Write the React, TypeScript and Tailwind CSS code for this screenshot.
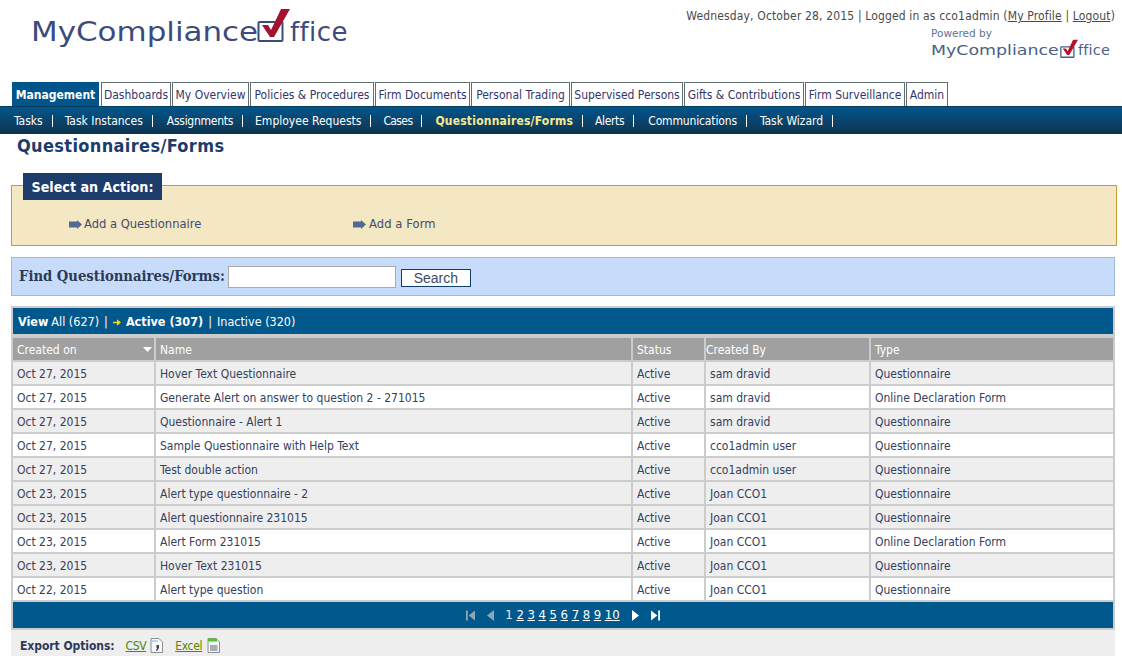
const F = "font-['DejaVu_Sans_Condensed','DejaVu_Sans',sans-serif]";

const tabs = [
  { t: "Dashboards", w: "w-[70px]" },
  { t: "My Overview", w: "w-[77px]" },
  { t: "Policies & Procedures", w: "w-[124px]" },
  { t: "Firm Documents", w: "w-[95px]" },
  { t: "Personal Trading", w: "w-[99px]" },
  { t: "Supervised Persons", w: "w-[112px]" },
  { t: "Gifts & Contributions", w: "w-[120px]" },
  { t: "Firm Surveillance", w: "w-[100px]" },
  { t: "Admin", w: "w-[42px]" },
];
const subs = [
  { s: "Tasks", c: "", g: "mr-[12px]" },
  { s: "Task Instances", c: "", g: "mr-[14px]" },
  { s: "Assignments", c: "tracking-[-0.27px]", g: "mr-[12px]" },
  { s: "Employee Requests", c: "", g: "mr-[12px]" },
  { s: "Cases", c: "tracking-[-0.6px]", g: "mr-[13px]" },
  { s: "Questionnaires/Forms", c: "font-bold tracking-[0.2px] text-[#f8e98f]", g: "mr-[12px]" },
  { s: "Alerts", c: "tracking-[-0.35px]", g: "mr-[14px]" },
  { s: "Communications", c: "tracking-[-0.15px]", g: "mr-[13px]" },
  { s: "Task Wizard", c: "", g: "mr-[12px]" },
];
const rows = [
["Oct 27, 2015","Hover Text Questionnaire","Active","sam dravid","Questionnaire"],
["Oct 27, 2015","Generate Alert on answer to question 2 - 271015","Active","sam dravid","Online Declaration Form"],
["Oct 27, 2015","Questionnaire - Alert 1","Active","sam dravid","Questionnaire"],
["Oct 27, 2015","Sample Questionnaire with Help Text","Active","cco1admin user","Questionnaire"],
["Oct 27, 2015","Test double action","Active","cco1admin user","Questionnaire"],
["Oct 23, 2015","Alert type questionnaire - 2","Active","Joan CCO1","Questionnaire"],
["Oct 23, 2015","Alert questionnaire 231015","Active","Joan CCO1","Questionnaire"],
["Oct 23, 2015","Alert Form 231015","Active","Joan CCO1","Online Declaration Form"],
["Oct 23, 2015","Hover Text 231015","Active","Joan CCO1","Questionnaire"],
["Oct 22, 2015","Alert type question","Active","Joan CCO1","Questionnaire"],
];
const grid = "grid grid-cols-[141px_475px_71px_163px_242px] gap-x-[2px]";

function Logo() {
  return (
    <div className="flex items-start w-[317px] h-[40px] font-['DejaVu_Sans',sans-serif] text-[26px] leading-[30px] text-[#3d4b7c]">
      <span className="block w-[226px] mt-[9px] shrink-0 whitespace-nowrap origin-left scale-x-[1.19]">MyCompliance</span>
      <svg viewBox="0 0 33 34" className="w-[33px] h-[34px] shrink-0">
        <rect x="1.5" y="14" width="24" height="19" rx="1" fill="none" stroke="#3d4b7c" strokeWidth="2" />
        <path d="M5 17 L11 17 L14 22 L24 1 L33 1 L17 29 L13 29 Z" fill="#a3122f" />
      </svg>
      <span className="block mt-[9px] whitespace-nowrap tracking-[0.4px]">ffice</span>
    </div>
  );
}

function SmallLogo() {
  return (
    <div className="flex items-start w-[182px] h-[20px] font-['DejaVu_Sans',sans-serif] text-[14.5px] leading-[17px] text-[#4a5f88]">
      <span className="block w-[129px] mt-[3px] shrink-0 whitespace-nowrap origin-left scale-x-[1.2]">MyCompliance</span>
      <svg viewBox="0 0 33 34" className="w-[18px] h-[19px] shrink-0">
        <rect x="1.5" y="14" width="24" height="19" rx="1" fill="none" stroke="#4a5f88" strokeWidth="2.4" />
        <path d="M5 17 L11 17 L14 22 L24 1 L33 1 L17 29 L13 29 Z" fill="#b5122f" />
      </svg>
      <span className="block mt-[3px] whitespace-nowrap tracking-[0.2px]">ffice</span>
    </div>
  );
}

function ArrowIcon() {
  return (
    <svg viewBox="0 0 13 9" className="w-[13px] h-[9px] shrink-0">
      <path d="M0 1.5 H8 V0 L13 4.5 L8 9 V7.5 H0 Z" fill="#4f6a96" />
    </svg>
  );
}

function FileIcon({ excel }: { excel?: boolean }) {
  return (
    <svg viewBox="0 0 13 15" className="w-[13px] h-[15px] shrink-0">
      <path d="M1 .5 H9 L12.5 4 V14.5 H1 Z" fill="#f7f7f7" stroke="#8a8f94" />
      {excel ? (
        <>
          <rect x="1" y="0.5" width="9" height="3" fill="#55c22b" />
          <rect x="3" y="7" width="7.5" height="6" fill="#a9aeb2" />
        </>
      ) : (
        <>
          <rect x="2" y="2" width="6" height="2" fill="#b9d3ec" />
          <path d="M6.5 7 h2.5 v3 l-2 3 h-1 l1-3 h-.5 Z" fill="#3d4650" />
        </>
      )}
    </svg>
  );
}

function Pager() {
  return (
    <div className="h-[26px] bg-[#00588c] flex items-center justify-center text-white text-[13px] gap-[12px]">
      <svg viewBox="0 0 10 11" className="w-[9px] h-[11px]"><path d="M0 0h2v11H0z M10 0v11L3 5.5z" fill="#8fa6b8" /></svg>
      <svg viewBox="0 0 7 11" className="w-[7px] h-[11px]"><path d="M7 0v11L0 5.5z" fill="#8fa6b8" /></svg>
      <div className="flex gap-[3.6px] ml-[-1px]">
        <span className="text-[#f6e7ef]">1</span>
        {["2","3","4","5","6","7","8","9","10"].map(n => <a key={n} className="underline">{n}</a>)}
      </div>
      <svg viewBox="0 0 7 11" className="w-[7px] h-[11px]"><path d="M0 0v11L7 5.5z" fill="#fff" /></svg>
      <svg viewBox="0 0 10 11" className="w-[9px] h-[11px]"><path d="M8 0h2v11H8z M0 0v11L7 5.5z" fill="#fff" /></svg>
    </div>
  );
}

export default function App() {
  return (
    <div className={`${F} w-[1122px] h-[656px] overflow-hidden bg-white text-[12px] text-[#33415e]`}>
      <header className="h-[82px] flex justify-between">
        <div className="pl-[31px] pt-[8px]"><Logo /></div>
        <div className="pr-[7px] pt-[9px] flex flex-col items-end">
          <div className="text-[12px] leading-[15px] tracking-[0.15px] text-[#4a4a4a]">
            Wednesday, October 28, 2015 | Logged in as cco1admin (<a className="underline">My Profile</a> | <a className="underline">Logout</a>)
          </div>
          <div className="w-[184px] mt-[3px]">
            <div className="font-['DejaVu_Sans',sans-serif] text-[10.5px] leading-[12px] text-[#5f7399]">Powered by</div>
            <SmallLogo />
          </div>
        </div>
      </header>

      <nav className="h-[24px] pl-[12px] flex gap-[1px] items-stretch">
        <div className="w-[87px] bg-[#00568c] text-white font-bold flex items-center justify-center pt-[1px] mr-[1px]">Management</div>
        {tabs.map(({ t, w }) => (
          <div key={t} className={`${w} border border-b-0 border-[#5f6f70] flex items-center justify-center whitespace-nowrap text-[#33366b] bg-white`}>{t}</div>
        ))}
      </nav>

      <div className="h-[28px] bg-gradient-to-b from-[#00568c] to-[#0d3450] border-t border-[#0b3a56] pl-[14px] flex items-center text-white">
        {subs.map(({ s, c, g }) => (
          <div key={s} className="flex items-center">
            <span className={c}>{s}</span>
            <span className={`w-px h-[12px] bg-white ml-[9px] ${g}`} />
          </div>
        ))}
      </div>

      <h1 className="pl-[17px] pt-[1px] h-[39px] text-[18px] leading-[22px] tracking-[0.35px] font-bold text-[#1c3c6b]">Questionnaires/Forms</h1>

      <section className="relative ml-[11px] mt-[12px] w-[1106px] h-[61px] border border-[#c99a2e] bg-[#f4e7c3] pl-[57px] pt-[30px] flex text-[#3f4d6c] text-[12.8px] leading-[16px]">
        <div className="absolute left-[11px] -top-[13px] w-[139px] h-[27px] bg-[#1c3c6b] text-white font-bold text-[14.2px] flex items-center justify-center">Select an Action:</div>
        <div className="w-[284px] h-[16px] flex items-center gap-[2px]"><ArrowIcon />Add a Questionnaire</div>
        <div className="h-[16px] flex items-center gap-[3px] tracking-[0.1px]"><ArrowIcon />Add a Form</div>
      </section>

      <section className="ml-[11px] mt-[11px] w-[1104px] h-[39px] border border-[#9db9e0] bg-[#c7dcfa] pl-[7px] flex items-center">
        <label className="font-['DejaVu_Serif_Condensed','DejaVu_Serif',serif] font-bold text-[14.7px] text-[#2b3a58]">Find Questionnaires/Forms:</label>
        <input className="ml-[3px] w-[168px] h-[22px] bg-white border border-[#aaa]" />
        <button className="ml-[5px] mt-[2px] w-[70px] h-[18px] bg-white border border-[#0d3f72] text-[14px] leading-[16px] font-['Liberation_Sans',sans-serif] text-[#3b4a66]">Search</button>
      </section>

      <section className="ml-[11px] mt-[10px] w-[1104px] bg-[#cccccc] px-[2px] pt-[2px] pb-[2px]">
        <div className="h-[26px] bg-[#00588c] pl-[5px] pt-[2px] flex items-center text-white text-[12.5px]">
          <b>View</b><span className="ml-[3px]">All (627)</span>
          <span className="mx-[5px]">|</span>
          <svg viewBox="0 0 10 8" className="w-[8px] h-[7px] mr-[5px]"><path d="M0 3h5V0l5 4-5 4V5H0z" fill="#f5d90a" /></svg>
          <b>Active (307)</b>
          <span className="mx-[5px]">|</span>
          <span>Inactive (320)</span>
        </div>
        <div className={`${grid} mt-[4px] h-[22px] text-white text-[12px]`}>
          <div className="bg-[#a0a0a0] pl-[4px] pt-[1px] flex items-center justify-between pr-[2px]">
            Created on
            <svg viewBox="0 0 9 5" className="w-[9px] h-[5px]"><path d="M0 0h9L4.5 5z" fill="#fff" /></svg>
          </div>
          <div className="bg-[#a0a0a0] pl-[4px] pt-[1px] flex items-center">Name</div>
          <div className="bg-[#a0a0a0] pl-[4px] pt-[1px] flex items-center">Status</div>
          <div className="bg-[#a0a0a0] pt-[1px] flex items-center">Created By</div>
          <div className="bg-[#a0a0a0] pl-[4px] pt-[1px] flex items-center">Type</div>
        </div>
        {rows.map((r, i) => {
          const bg = [1, 3, 7, 9].includes(i) ? "bg-white" : "bg-[#eeeeee]";
          return (
            <div key={i} className={`${grid} h-[24px] pt-[2px]`}>
              {r.map((c, j) => (
                <div key={j} className={`${bg} flex items-center pl-[4px] pt-[1px]`}>{c}</div>
              ))}
            </div>
          );
        })}
        <div className="pt-[2px]"><Pager /></div>
      </section>

      <footer className="ml-[11px] w-[1104px] h-[26px] bg-[#eeeeee] pl-[9px] pt-[5px] flex items-center">
        <b className="text-[#2b3a58] tracking-[-0.05px]">Export Options:</b>
        <a className="underline text-[#4f8a00] ml-[11px] tracking-[-0.4px]">CSV</a>
        <span className="ml-[4px]"><FileIcon /></span>
        <a className="underline text-[#4f8a00] ml-[12px] tracking-[-0.3px]">Excel</a>
        <span className="ml-[5px]"><FileIcon excel /></span>
      </footer>
    </div>
  );
}
